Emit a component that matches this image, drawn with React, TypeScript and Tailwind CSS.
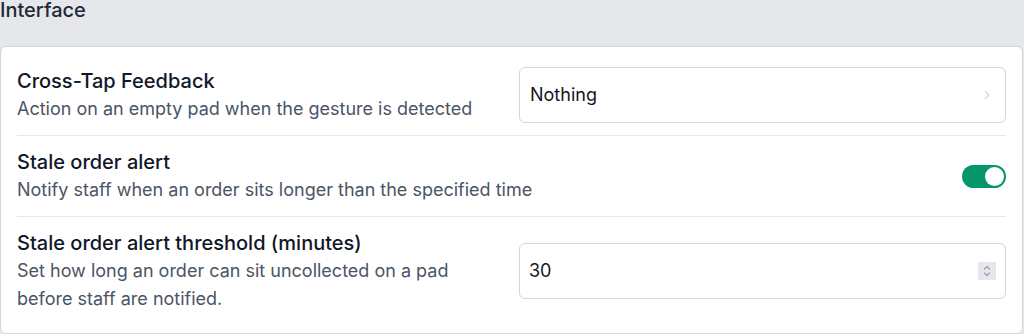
import { useState } from 'react';

const font = { fontFamily: 'Inter, "Noto Sans", sans-serif' };

function Row({
  title,
  desc,
  children,
  last,
}: {
  title: string;
  desc: string;
  children?: React.ReactNode;
  last?: boolean;
}) {
  return (
    <div className={`flex items-center gap-4 py-3 ${last ? '' : 'border-b border-gray-200'}`}>
      <div className="flex-1 min-w-0">
        <div className="text-xl leading-7 font-medium text-gray-900">{title}</div>
        <div className="text-lg leading-7 text-gray-600">{desc}</div>
      </div>
      {children}
    </div>
  );
}

export default function App() {
  const [alertOn, setAlertOn] = useState(true);
  const [minutes, setMinutes] = useState('30');

  return (
    <div className="min-h-[334px] w-[1024px] bg-gray-200 overflow-hidden" style={font}>
      <h2 className="text-xl leading-5 font-medium text-gray-800">Interface</h2>

      <div className="mt-[26px] w-[1023px] bg-white border border-gray-300 rounded-md px-4 py-2">
        {/* Cross-Tap Feedback */}
        <Row title="Cross-Tap Feedback" desc="Action on an empty pad when the gesture is detected">
          <button className="w-[487px] h-14 shrink-0 flex items-center justify-between rounded-md border border-gray-300 bg-white pl-[10px] pr-[13px] text-lg text-gray-900">
            <span>Nothing</span>
            <svg width="10" height="10" viewBox="0 0 10 10" fill="none" className="text-gray-300">
              <path d="M3.5 1.5 7 5l-3.5 3.5" stroke="currentColor" strokeWidth="1.4" strokeLinecap="round" strokeLinejoin="round" />
            </svg>
          </button>
        </Row>

        {/* Stale order alert */}
        <Row title="Stale order alert" desc="Notify staff when an order sits longer than the specified time">
          <button
            onClick={() => setAlertOn(!alertOn)}
            className={`w-11 h-[23px] shrink-0 rounded-full p-[2px] flex items-center ${
              alertOn ? 'bg-[#079669] justify-end' : 'bg-gray-300 justify-start'
            }`}
          >
            <span className="block w-[19px] h-[19px] rounded-full bg-white" />
          </button>
        </Row>

        {/* Threshold */}
        <Row
          title="Stale order alert threshold (minutes)"
          desc="Set how long an order can sit uncollected on a pad before staff are notified."
          last
        >
          <div className="w-[487px] h-14 shrink-0 flex items-center rounded-md border border-gray-300 bg-white pl-[9px] pr-[9px]">
            <input
              value={minutes}
              onChange={(e) => setMinutes(e.target.value)}
              className="flex-1 min-w-0 bg-transparent outline-none text-lg text-gray-900"
            />
            <div className="w-[18px] h-[18px] bg-gray-200 flex flex-col items-center justify-center">
              <svg width="10" height="14" viewBox="0 0 10 14" fill="none" className="text-gray-400">
                <path d="M2.5 5 5 2.5 7.5 5M2.5 9 5 11.5 7.5 9" stroke="currentColor" strokeWidth="1.2" strokeLinecap="round" strokeLinejoin="round" />
              </svg>
            </div>
          </div>
        </Row>
      </div>
    </div>
  );
}
